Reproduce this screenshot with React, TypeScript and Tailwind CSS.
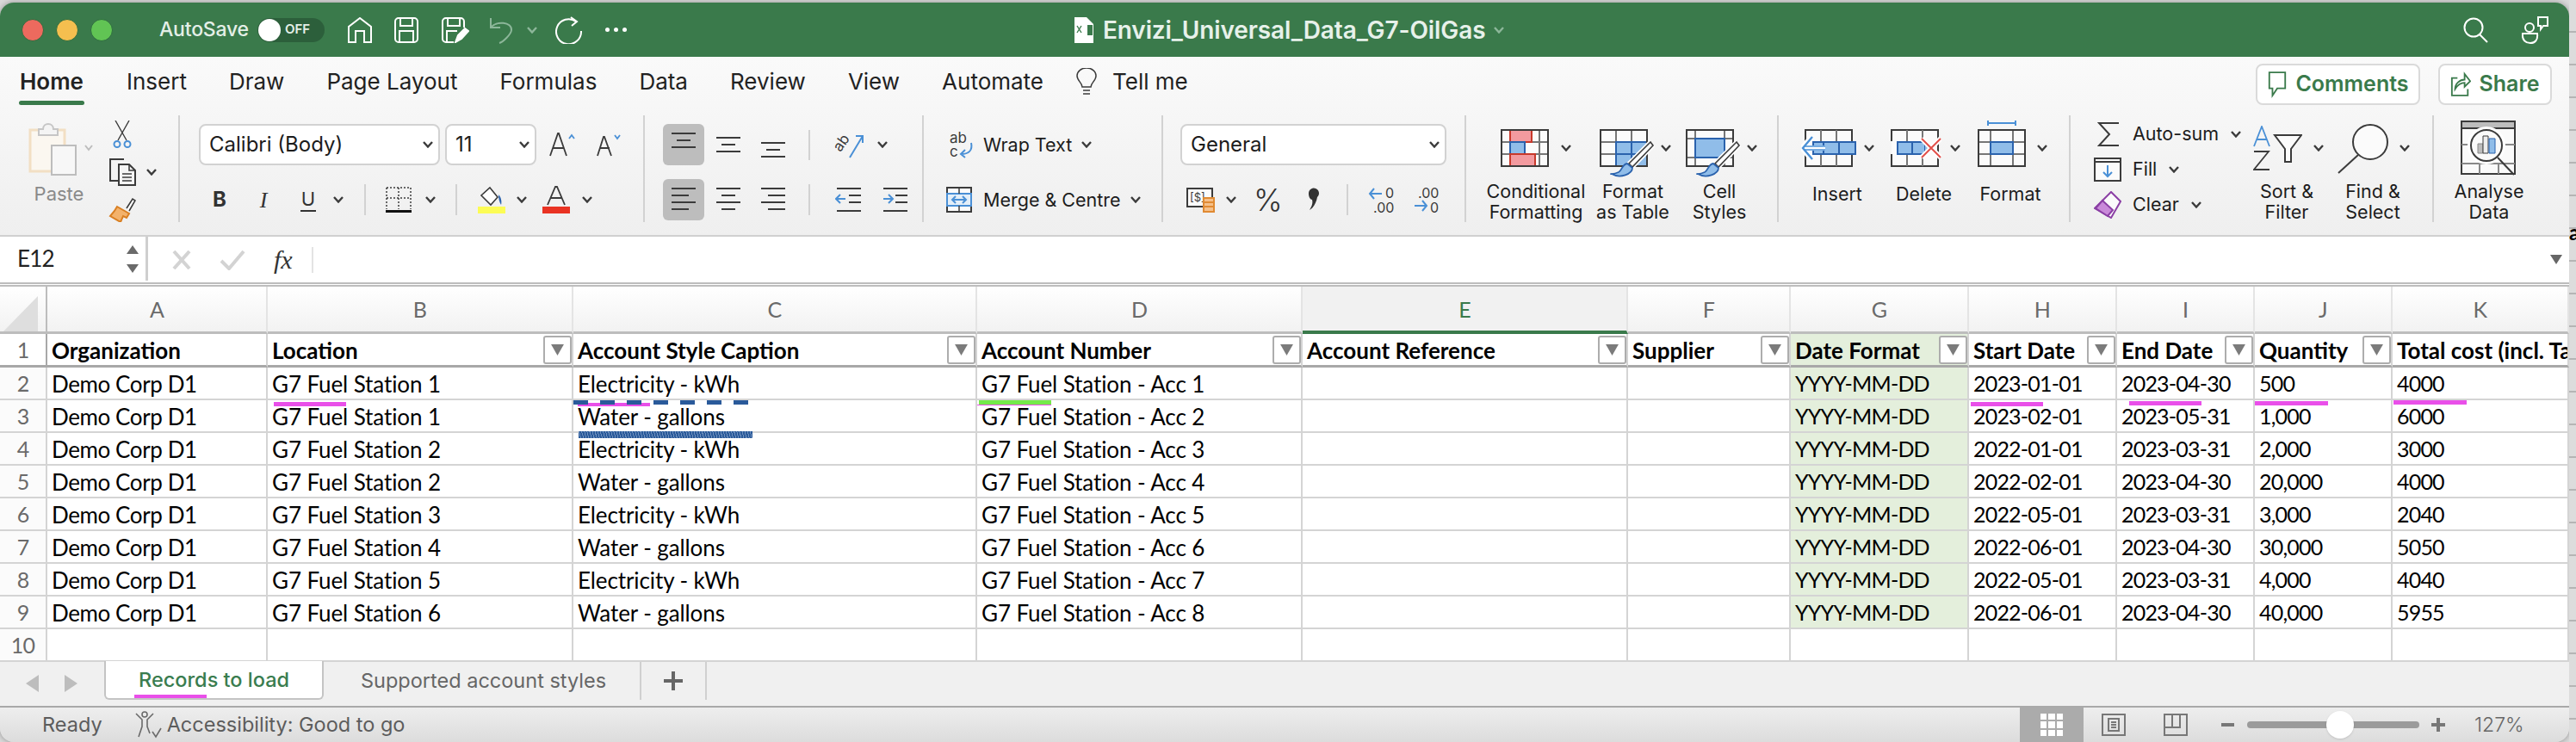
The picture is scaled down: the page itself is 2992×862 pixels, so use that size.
import * as React from "react"

const ink = "#3b3b3b"
const blue = "#4a90d6"
const navy = "#2a62ad"
const sky = "#90bde9"

const tabs = ["Insert", "Draw", "Page Layout", "Formulas", "Data", "Review", "View", "Automate"]

const rows = [
  ["Demo Corp D1", "G7 Fuel Station 1", "Electricity - kWh", "G7 Fuel Station - Acc 1", "2023-01-01", "2023-04-30", "500", "4000"],
  ["Demo Corp D1", "G7 Fuel Station 1", "Water - gallons", "G7 Fuel Station - Acc 2", "2023-02-01", "2023-05-31", "1,000", "6000"],
  ["Demo Corp D1", "G7 Fuel Station 2", "Electricity - kWh", "G7 Fuel Station - Acc 3", "2022-01-01", "2023-03-31", "2,000", "3000"],
  ["Demo Corp D1", "G7 Fuel Station 2", "Water - gallons", "G7 Fuel Station - Acc 4", "2022-02-01", "2023-04-30", "20,000", "4000"],
  ["Demo Corp D1", "G7 Fuel Station 3", "Electricity - kWh", "G7 Fuel Station - Acc 5", "2022-05-01", "2023-03-31", "3,000", "2040"],
  ["Demo Corp D1", "G7 Fuel Station 4", "Water - gallons", "G7 Fuel Station - Acc 6", "2022-06-01", "2023-04-30", "30,000", "5050"],
  ["Demo Corp D1", "G7 Fuel Station 5", "Electricity - kWh", "G7 Fuel Station - Acc 7", "2022-05-01", "2023-03-31", "4,000", "4040"],
  ["Demo Corp D1", "G7 Fuel Station 6", "Water - gallons", "G7 Fuel Station - Acc 8", "2022-06-01", "2023-04-30", "40,000", "5955"],
]

const headers = [
  { label: "Organization", filter: false },
  { label: "Location", filter: true },
  { label: "Account Style Caption", filter: true },
  { label: "Account Number", filter: true },
  { label: "Account Reference", filter: true },
  { label: "Supplier", filter: true },
  { label: "Date Format", filter: true, green: true },
  { label: "Start Date", filter: true },
  { label: "End Date", filter: true },
  { label: "Quantity", filter: true },
  { label: "Total cost (incl. Tax)", filter: false },
]

const letters = ["A", "B", "C", "D", "E", "F", "G", "H", "I", "J", "K"]
const gridCols = "grid grid-cols-[55px_256px_355px_469px_378px_378px_189px_207px_172px_160px_160px_205px]"
const wordCell = "text-[26px] tracking-[-0.1px]"

function Chev({ className = "", color = ink }: { className?: string; color?: string }) {
  return (
    <svg viewBox="0 0 12 8" className={`h-[8px] w-[12px] shrink-0 ${className}`} fill="none" stroke={color} strokeWidth="2.4">
      <path d="M1 1l5 5.5L11 1" />
    </svg>
  )
}

function Sep({ className = "" }: { className?: string }) {
  return <div className={`w-[2px] shrink-0 bg-[#d2d2d2] ${className}`} />
}

function Select({ label, className }: { label: string; className: string }) {
  return (
    <div className={`flex h-[48px] shrink-0 items-center justify-between rounded-[8px] border-2 border-[#d2d2d2] bg-white pr-[6px] pl-[10px] text-[24px] whitespace-nowrap text-[#1c1c1c] ${className}`}>
      <span>{label}</span>
      <Chev />
    </div>
  )
}

function AlignLines({ ys, widths, anchor }: { ys: number[]; widths: number[]; anchor: "l" | "c" | "r" }) {
  return (
    <svg viewBox="0 0 28 32" className="h-[32px] w-[28px]" stroke={ink} strokeWidth="2">
      {ys.map((y, i) => {
        const w = widths[i]
        const x = anchor === "l" ? 0 : anchor === "c" ? (28 - w) / 2 : 28 - w
        return <path key={i} d={`M${x} ${y}h${w}`} />
      })}
    </svg>
  )
}

function AlignButton({ active, children }: { active?: boolean; children: React.ReactNode }) {
  return (
    <div className={`flex h-[48px] w-[48px] shrink-0 items-center justify-center rounded-[6px] ${active ? "bg-[#bdbdbd]" : ""}`}>
      {children}
    </div>
  )
}

function TableGrid({ children, w, h }: { children?: React.ReactNode; w: number; h: number }) {
  return (
    <svg viewBox={`0 0 ${w} ${h}`} width={w} height={h} className="shrink-0" fill="none">
      {children}
    </svg>
  )
}

function Frame({ y = 0 }: { y?: number }) {
  return <rect x="1" y={y + 1} width="54" height="42" fill="#fbfbfb" stroke={ink} strokeWidth="2" />
}

function Brush() {
  return (
    <g>
      <path d="M58 16 L34 40 L30 46 L38 44 L61 20 Z" fill="#fff" stroke="#fff" strokeWidth="5" />
      <path d="M59 15 L34 40 L38 44 L62 19 Z" fill="#fff" stroke={ink} strokeWidth="1.6" />
      <path d="M32 40 C26 41 26 48 22 50 C15 53 11 52 14 52 C24 58 38 52 38 45 Z" fill={sky} stroke={navy} strokeWidth="1.8" />
    </g>
  )
}

function Label({ children }: { children: React.ReactNode }) {
  return <div className="text-center text-[21.5px] leading-[24px] whitespace-nowrap text-[#1c1c1c]">{children}</div>
}

function Filter() {
  return (
    <div className="flex h-[33px] w-[33px] shrink-0 items-center justify-center rounded-[3px] border-2 border-[#adadad] bg-white">
      <svg viewBox="0 0 16 14" className="h-[13px] w-[15px]" fill="#7b7b7b">
        <path d="M0 0h16L8 14z" />
      </svg>
    </div>
  )
}

function TitleBar() {
  return (
    <div className="flex h-[63px] shrink-0 items-center bg-[#3a7a4b] text-white">
      <div className="ml-[25px] flex gap-[14px]">
        <div className="h-[26px] w-[26px] rounded-full border border-[#2f6d3f] bg-[#ed6a5e]" />
        <div className="h-[26px] w-[26px] rounded-full border border-[#2f6d3f] bg-[#f5bf4f]" />
        <div className="h-[26px] w-[26px] rounded-full border border-[#2f6d3f] bg-[#61c454]" />
      </div>
      <span className="ml-[54px] text-[23px] font-medium tracking-[-0.2px] text-[#e4efe7]">AutoSave</span>
      <div className="ml-[10px] flex h-[28px] w-[78px] items-center rounded-full bg-[#2c5f3b]">
        <div className="ml-[1px] h-[26px] w-[26px] rounded-full bg-white" />
        <span className="ml-[5px] text-[15px] font-semibold text-[#e4efe7]">OFF</span>
      </div>
      <svg viewBox="0 0 28 30" className="ml-[27px] h-[30px] w-[28px]" fill="none" stroke="#fff" strokeWidth="2">
        <path d="M1 29V11L14 1l13 10v18h-8V16H9v13z" />
      </svg>
      <svg viewBox="0 0 28 30" className="ml-[26px] h-[30px] w-[28px]" fill="none" stroke="#fff" strokeWidth="2">
        <path d="M5 1h18a4 4 0 0 1 4 4v20a4 4 0 0 1-4 4H5a4 4 0 0 1-4-4V5a4 4 0 0 1 4-4zM7 1v9h14V1M6 29V16h16v13" />
      </svg>
      <svg viewBox="0 0 32 30" className="ml-[27px] h-[30px] w-[32px]" fill="none" stroke="#fff" strokeWidth="2">
        <path d="M14 29H5a4 4 0 0 1-4-4V5a4 4 0 0 1 4-4h17a4 4 0 0 1 4 4v7M7 1v9h14V1M6 29V16h12" />
        <path d="M16 29l3-8 8-8 4 3-8 9z" fill="#fff" />
      </svg>
      <svg viewBox="0 0 30 32" className="ml-[22px] h-[32px] w-[30px]" fill="none" stroke="#8db79a" strokeWidth="2">
        <path d="M3 2v11h11M3 13C9 5 28 6 27 16c-.4 5-10 14-14 15" />
      </svg>
      <Chev className="ml-[15px]" color="#8db79a" />
      <svg viewBox="0 0 32 32" className="ml-[21px] h-[32px] w-[32px]" fill="none" stroke="#fff" strokeWidth="2">
        <path d="M24 6A14.5 14.5 0 1 0 30 17M18 1l7 5-6 5" />
      </svg>
      <div className="ml-[26px] flex gap-[5px]">
        <div className="h-[5px] w-[5px] rounded-full bg-white" />
        <div className="h-[5px] w-[5px] rounded-full bg-white" />
        <div className="h-[5px] w-[5px] rounded-full bg-white" />
      </div>
      <svg viewBox="0 0 22 30" className="ml-[520px] h-[30px] w-[22px]">
        <path d="M0 0h14l8 8v22H0z" fill="#fff" />
        <path d="M15 9h6v12h-6z" fill="#3a7a4b" />
        <path d="M3 10l5 8M8 10l-5 8" stroke="#3a7a4b" strokeWidth="1.4" />
      </svg>
      <span className="ml-[11px] text-[28px] font-semibold tracking-[-0.1px] whitespace-nowrap text-[#e7f1ea]">Envizi_Universal_Data_G7-OilGas</span>
      <Chev className="ml-[10px]" color="#8db79a" />
      <svg viewBox="0 0 30 30" className="ml-auto h-[30px] w-[30px]" fill="none" stroke="#fff" strokeWidth="2">
        <circle cx="12" cy="12" r="10.5" />
        <path d="M19 20l9 9" />
      </svg>
      <svg viewBox="0 0 32 32" className="mr-[23px] ml-[38px] h-[32px] w-[32px]" fill="none" stroke="#fff" strokeWidth="2">
        <circle cx="9" cy="13" r="5" />
        <path d="M1 20h17c1 8-3 11-8 11S0 28 1 20zM19 1h11v10h-5l-3 4v-4h-3z" />
      </svg>
    </div>
  )
}

function RibbonTabs() {
  return (
    <div className="flex h-[68px] items-start pr-[20px] pl-[22px]">
      <div className="flex gap-[49px] pt-[13px] text-[26px] leading-[32px] whitespace-nowrap text-[#222]">
        <div className="flex w-[76px] flex-col items-center">
          <span className="font-semibold">Home</span>
          <div className="mt-[6px] h-[5px] w-[76px] rounded-full bg-[#3a7a4b]" />
        </div>
        {tabs.map((tab) => (
          <span key={tab}>{tab}</span>
        ))}
        <div className="-ml-[11px] flex items-start">
          <svg viewBox="0 0 24 32" className="h-[32px] w-[24px]" fill="none" stroke={ink} strokeWidth="1.5">
            <path d="M7 22c0-5-6-7-6-13a11 9 0 0 1 22 0c0 6-6 8-6 13zM8 26h8M8 30h8" />
          </svg>
          <span className="ml-[18px]">Tell me</span>
        </div>
      </div>
      <div className="ml-auto mt-[8px] flex gap-[21px] text-[25px] font-semibold text-[#3a7a4b]">
        <div className="flex h-[48px] w-[191px] items-center justify-center gap-[9px] rounded-[8px] border-2 border-[#dadada] bg-white">
          <svg viewBox="0 0 26 34" className="h-[32px] w-[24px]" fill="none" stroke="#3a7a4b" strokeWidth="2">
            <path d="M3 2h20v20H13l-6 9v-9H3z" />
          </svg>
          Comments
        </div>
        <div className="flex h-[48px] w-[132px] items-center justify-center gap-[9px] rounded-[8px] border-2 border-[#dadada] bg-white">
          <svg viewBox="0 0 26 32" className="h-[30px] w-[24px]" fill="none" stroke="#3a7a4b" strokeWidth="2">
            <path d="M9 8H2v22h20v-8M6 22c0-7 6-12 12-12V3l7 9-7 7v-5c-5 0-9 3-12 8z" />
          </svg>
          Share
        </div>
      </div>
    </div>
  )
}

function ClipboardGroup() {
  return (
    <div className="flex h-[124px] w-[209px] shrink-0 border-r-2 border-[#d2d2d2]">
      <div className="ml-[33px] flex w-[77px] flex-col">
        <svg viewBox="0 0 77 60" className="mt-[9px] h-[60px] w-[77px] overflow-visible" fill="none">
          <path d="M2 8h40v48H2z" stroke="#f2dfc4" strokeWidth="3" fill="#fbf7f0" />
          <path d="M12 14V7h5c0-8 12-8 12 0h5v7z" stroke="#c6c6c6" strokeWidth="2" fill="#f4f4f4" />
          <path d="M27 26h28v34H27z" stroke="#bdbdbd" strokeWidth="2" fill="#f7f7f7" />
          <path d="M66 26l4 5 4-5" stroke="#bdbdbd" strokeWidth="2" />
        </svg>
        <div className="mt-[8px] w-[71px] text-center text-[22px] leading-[28px] text-[#8a8a8a]">Paste</div>
      </div>
      <div className="ml-[16px] flex flex-col">
        <svg viewBox="0 0 22 32" className="mt-[6px] ml-[5px] h-[32px] w-[22px]" fill="none" stroke={ink} strokeWidth="1.4">
          <path d="M3 0l13 23M19 0L6 23" />
          <circle cx="5" cy="27.5" r="3.5" stroke={blue} strokeWidth="2" />
          <circle cx="17" cy="27.5" r="3.5" stroke={blue} strokeWidth="2" />
        </svg>
        <div className="mt-[12px] flex items-center">
          <svg viewBox="0 0 32 32" className="h-[32px] w-[32px]" fill="none" stroke={ink} strokeWidth="2">
            <path d="M18 1H2v25h9" />
            <path d="M12 7h12l7 7v17H12z" fill="#f4f4f4" />
            <path d="M24 7v7h7M16 18h11M16 22h11M16 26h11" strokeWidth="1.6" />
          </svg>
          <Chev className="ml-[12px]" />
        </div>
        <svg viewBox="0 0 32 30" className="mt-[12px] h-[30px] w-[32px]" fill="none">
          <path d="M21 14l7-11 3 2-7 12" fill="#fff" stroke={ink} strokeWidth="1.6" />
          <path d="M10 12l14 8-3 5-4-2-3 7-12-7 5-6z" fill="#f3b26b" stroke="#d97f22" strokeWidth="2" />
        </svg>
      </div>
    </div>
  )
}

function FontGroup() {
  return (
    <div className="flex h-[124px] w-[540px] shrink-0 flex-col border-r-2 border-[#d2d2d2]">
      <div className="ml-[22px] mt-[10px] flex h-[48px] items-center">
        <Select label="Calibri (Body)" className="w-[280px]" />
        <Select label="11" className="ml-[6px] w-[106px]" />
        <svg viewBox="0 0 30 28" className="ml-[15px] h-[28px] w-[30px]" fill="none" stroke={ink} strokeWidth="1.8">
          <path d="M1 27L10 1h1l9 26M4 18h13" />
          <path d="M23 7l3-4 3 4" stroke={blue} />
        </svg>
        <svg viewBox="0 0 30 28" className="ml-[25px] h-[28px] w-[30px]" fill="none" stroke={ink} strokeWidth="1.8">
          <path d="M1 27L8 5h1l8 22M4 18h11" />
          <path d="M21 3l3 4 3-4" stroke={blue} />
        </svg>
      </div>
      <div className="mt-[22px] flex h-[36px] items-center">
        <span className="ml-[38px] w-[15px] text-center text-[24px] font-bold text-[#333]">B</span>
        <span className="ml-[38px] w-[12px] text-center font-['Liberation_Serif',serif] text-[26px] text-[#333] italic">I</span>
        <span className="ml-[37px] w-[18px] border-b-2 border-[#333] text-center text-[22px] leading-[26px] text-[#333]">U</span>
        <Chev className="ml-[20px]" />
        <Sep className="ml-[24px] h-[36px]" />
        <svg viewBox="0 0 30 30" className="ml-[23px] h-[30px] w-[30px]" fill="none" stroke={ink}>
          <path d="M1 1h28M1 1v25M29 1v25M15 1v25M1 13h28" strokeWidth="1.5" strokeDasharray="2 2" />
          <path d="M0 28.5h30" strokeWidth="3" stroke="#111" />
        </svg>
        <Chev className="ml-[16px]" />
        <Sep className="ml-[23px] h-[36px]" />
        <svg viewBox="0 0 32 32" className="ml-[24px] h-[32px] w-[32px]" fill="none">
          <path d="M14 2l9 11-8 9-11-11z" stroke={ink} strokeWidth="1.6" fill="#fff" />
          <path d="M24 10c3 3 4 8 3 12-2-3-3-7-3-12z" fill={navy} />
          <path d="M0 24h32v8H0z" fill="#fcfc55" />
        </svg>
        <Chev className="ml-[13px]" />
        <svg viewBox="0 0 32 32" className="ml-[18px] h-[32px] w-[32px]">
          <path d="M6 22L15 1h2l9 21M10 14h12" fill="none" stroke={ink} strokeWidth="1.8" />
          <path d="M0 24h32v8H0z" fill="#e93323" />
        </svg>
        <Chev className="ml-[14px]" />
      </div>
    </div>
  )
}

function AlignGroup() {
  return (
    <div className="flex h-[124px] w-[324px] shrink-0 flex-col gap-[16px] border-r-2 border-[#d2d2d2] pt-[10px] pl-[21px]">
      <div className="flex h-[48px] items-center gap-[4px]">
        <AlignButton active>
          <AlignLines ys={[3, 11, 19]} widths={[28, 16, 28]} anchor="c" />
        </AlignButton>
        <AlignButton>
          <AlignLines ys={[8, 16, 24]} widths={[28, 16, 28]} anchor="c" />
        </AlignButton>
        <AlignButton>
          <AlignLines ys={[14, 22, 30]} widths={[28, 16, 28]} anchor="c" />
        </AlignButton>
        <Sep className="ml-[13px] h-[35px]" />
        <svg viewBox="0 0 36 32" className="ml-[22px] h-[32px] w-[36px] overflow-visible" fill="none">
          <path d="M20 31L35 6M27 6h8v8" stroke={blue} strokeWidth="2" />
          <text x="1" y="18" fontSize="17" fill={ink} transform="rotate(-55 12 14)" fontFamily="Inter">ab</text>
        </svg>
        <Chev className="ml-[12px]" />
      </div>
      <div className="flex h-[48px] items-center gap-[4px]">
        <AlignButton active>
          <AlignLines ys={[3, 11, 19, 27]} widths={[28, 20, 28, 20]} anchor="l" />
        </AlignButton>
        <AlignButton>
          <AlignLines ys={[3, 11, 19, 27]} widths={[28, 16, 28, 16]} anchor="c" />
        </AlignButton>
        <AlignButton>
          <AlignLines ys={[3, 11, 19, 27]} widths={[28, 20, 28, 20]} anchor="r" />
        </AlignButton>
        <Sep className="ml-[13px] h-[36px]" />
        <svg viewBox="0 0 30 32" className="ml-[25px] h-[32px] w-[30px]" fill="none" stroke={ink} strokeWidth="2">
          <path d="M2 3h28M16 11h14M16 19h14M2 29h28" />
          <path d="M12 15H2M6 10l-5 5 5 5" stroke={blue} />
        </svg>
        <svg viewBox="0 0 30 32" className="ml-[22px] h-[32px] w-[30px]" fill="none" stroke={ink} strokeWidth="2">
          <path d="M0 3h28M14 11h14M14 19h14M0 29h28" />
          <path d="M0 15h10M6 10l5 5-5 5" stroke={blue} />
        </svg>
      </div>
    </div>
  )
}

function WrapGroup() {
  return (
    <div className="flex h-[124px] w-[278px] shrink-0 flex-col gap-[16px] border-r-2 border-[#d2d2d2] pt-[10px] text-[21.5px] whitespace-nowrap text-[#1c1c1c]">
      <div className="flex h-[48px] items-center">
        <svg viewBox="0 0 30 32" className="ml-[29px] h-[32px] w-[30px] overflow-visible" fill="none">
          <text x="1" y="14" fontSize="17" fill={ink} fontFamily="Inter">ab</text>
          <text x="1" y="30" fontSize="17" fill={ink} fontFamily="Inter">c</text>
          <path d="M26 14c2 9-3 13-12 13M19 22l-5 5 5 4" stroke={blue} strokeWidth="2" />
        </svg>
        <span className="ml-[10px]">Wrap Text</span>
        <Chev className="ml-[11px]" />
      </div>
      <div className="flex h-[48px] items-center">
        <svg viewBox="0 0 30 30" className="ml-[26px] h-[30px] w-[30px]" fill="none">
          <rect x="1" y="1" width="28" height="28" stroke={ink} strokeWidth="2" fill="#fbfbfb" />
          <rect x="1" y="8" width="28" height="14" stroke={blue} strokeWidth="2" fill="#e4eff9" />
          <path d="M15 1v7M15 22v7" stroke={ink} strokeWidth="1.5" />
          <path d="M7 15h16M11 11l-4 4 4 4M19 11l4 4-4 4" stroke={blue} strokeWidth="2" />
        </svg>
        <span className="ml-[13px]">Merge &amp; Centre</span>
        <Chev className="ml-[11px]" />
      </div>
    </div>
  )
}

function NumberGroup() {
  return (
    <div className="flex h-[124px] w-[352px] shrink-0 flex-col border-r-2 border-[#d2d2d2] pt-[10px]">
      <Select label="General" className="ml-[20px] w-[309px]" />
      <div className="mt-[22px] flex h-[36px] items-center">
        <svg viewBox="0 0 34 32" className="ml-[27px] h-[32px] w-[34px] overflow-visible" fill="none">
          <rect x="1" y="3" width="29" height="21" stroke={ink} strokeWidth="2" fill="#fbfbfb" />
          <text x="4" y="18" fontSize="13" fill={ink} fontFamily="Inter">{"[$]"}</text>
          <path d="M20 14h12v16H20z" fill="#f5c08a" stroke="#e08a32" strokeWidth="2" />
          <path d="M20 19h12M20 24h12" stroke="#e08a32" strokeWidth="2" />
        </svg>
        <Chev className="ml-[12px]" />
        <span className="ml-[20px] w-[30px] text-center text-[36px] leading-[36px] font-light text-[#333]">%</span>
        <svg viewBox="0 0 18 32" className="ml-[30px] h-[32px] w-[18px]" fill="#333">
          <path d="M4 9a6 6 0 1 1 10 4c-1 6-4 12-9 15 3-5 4-8 3-12-2 0-4-3-4-7z" />
        </svg>
        <Sep className="ml-[30px] h-[36px]" />
        <svg viewBox="0 0 30 34" className="ml-[24px] h-[34px] w-[30px] overflow-visible" fill="none">
          <path d="M1 10h14M6 4l-5 6 5 6" stroke={blue} strokeWidth="2" />
          <text x="19" y="15" fontSize="16" fill={ink} fontFamily="Inter">0</text>
          <text x="5" y="32" fontSize="16" fill={ink} fontFamily="Inter">.00</text>
        </svg>
        <svg viewBox="0 0 32 34" className="ml-[20px] h-[34px] w-[32px] overflow-visible" fill="none">
          <path d="M3 24h14M12 18l5 6-5 6" stroke={blue} strokeWidth="2" />
          <text x="7" y="15" fontSize="16" fill={ink} fontFamily="Inter">.00</text>
          <text x="21" y="32" fontSize="16" fill={ink} fontFamily="Inter">0</text>
        </svg>
      </div>
    </div>
  )
}

function StylesGroup() {
  return (
    <div className="flex h-[124px] w-[363px] shrink-0 border-r-2 border-[#d2d2d2] pl-[19px]">
      <div className="flex w-[124px] flex-col">
        <div className="flex h-[80px] items-start">
          <div className="ml-[21px] mt-[16px]">
            <TableGrid w={56} h={44}>
              <Frame />
              <path d="M11 1v42M45 1v42M1 15h54M1 29h54" stroke="#777" strokeWidth="2" />
              <rect x="11" y="1" width="25" height="14" fill="#f29a9f" stroke="#c8392b" strokeWidth="2" />
              <rect x="11" y="15" width="17" height="14" fill={sky} stroke={navy} strokeWidth="2" />
              <rect x="11" y="29" width="29" height="14" fill="#f29a9f" stroke="#c8392b" strokeWidth="2" />
              <rect x="1" y="1" width="54" height="42" stroke={ink} strokeWidth="2" />
            </TableGrid>
          </div>
          <Chev className="ml-[14px] mt-[34px]" />
        </div>
        <Label>Conditional<br />Formatting</Label>
      </div>
      <div className="flex w-[101px] flex-col">
        <div className="flex h-[80px] items-start">
          <div className="ml-[12px] mt-[16px]">
            <TableGrid w={64} h={56}>
              <Frame />
              <path d="M19 1v42M37 1v42M1 15h54M1 29h54" stroke="#777" strokeWidth="2" />
              <rect x="19" y="15" width="36" height="28" fill={sky} stroke={navy} strokeWidth="2" />
              <path d="M37 15v28M19 29h36" stroke={navy} strokeWidth="2" />
              <path d="M1 1h54v42H1z" stroke={ink} strokeWidth="2" />
              <Brush />
            </TableGrid>
          </div>
          <Chev className="ml-[7px] mt-[34px]" />
        </div>
        <Label>Format<br />as Table</Label>
      </div>
      <div className="flex w-[100px] flex-col">
        <div className="flex h-[80px] items-start">
          <div className="ml-[11px] mt-[16px]">
            <TableGrid w={64} h={56}>
              <Frame />
              <path d="M11 1v42M45 1v42M1 11h54M1 33h54" stroke="#777" strokeWidth="2" />
              <rect x="11" y="11" width="34" height="22" fill={sky} stroke={navy} strokeWidth="2" />
              <path d="M1 1h54v42H1z" stroke={ink} strokeWidth="2" />
              <Brush />
            </TableGrid>
          </div>
          <Chev className="ml-[7px] mt-[34px]" />
        </div>
        <Label>Cell<br />Styles</Label>
      </div>
    </div>
  )
}

function CellsGroup() {
  return (
    <div className="flex h-[124px] w-[339px] shrink-0 border-r-2 border-[#d2d2d2] pl-[18px]">
      <div className="flex w-[100px] flex-col">
        <div className="flex h-[79px] items-start">
          <div className="ml-[8px] mt-[16px]">
            <TableGrid w={64} h={44}>
              <rect x="5" y="1" width="54" height="42" fill="#fbfbfb" stroke={ink} strokeWidth="2" />
              <path d="M23 1v42M41 1v42" stroke="#777" strokeWidth="2" />
              <rect x="14" y="15" width="49" height="14" fill={sky} stroke={navy} strokeWidth="2" />
              <path d="M26 15v14M44 15v14" stroke={navy} strokeWidth="2" />
              <path d="M28 22H2M12 9L1 22l11 13" stroke="#fff" strokeWidth="6" />
              <path d="M28 20H4M28 24H4" stroke={blue} strokeWidth="1.5" />
              <path d="M13 9L2 22l11 13" stroke={blue} strokeWidth="2.4" />
            </TableGrid>
          </div>
          <Chev className="ml-[9px] mt-[34px]" />
        </div>
        <Label>Insert</Label>
      </div>
      <div className="flex w-[101px] flex-col">
        <div className="flex h-[79px] items-start">
          <div className="ml-[11px] mt-[16px]">
            <TableGrid w={60} h={44}>
              <path d="M2 14V1h54v42H2V29" fill="#fbfbfb" stroke={ink} strokeWidth="2" />
              <path d="M20 1v42M38 1v42" stroke="#777" strokeWidth="2" />
              <rect x="9" y="15" width="32" height="14" fill={sky} stroke={navy} strokeWidth="2" />
              <path d="M26 15v14" stroke={navy} strokeWidth="2" />
              <path d="M41 15l9 7-9 7z" fill={sky} />
              <path d="M37 11l22 22M59 11L37 33" stroke="#fff" strokeWidth="6" />
              <path d="M37 11l22 22M59 11L37 33" stroke="#e2504a" strokeWidth="2" />
            </TableGrid>
          </div>
          <Chev className="ml-[10px] mt-[34px]" />
        </div>
        <Label>Delete</Label>
      </div>
      <div className="flex w-[100px] flex-col">
        <div className="flex h-[79px] items-start">
          <div className="ml-[12px] mt-[6px]">
            <TableGrid w={56} h={54}>
              <path d="M12 3h32M12 0v6M44 0v6" stroke={blue} strokeWidth="2" />
              <rect x="1" y="11" width="54" height="42" fill="#fbfbfb" stroke={ink} strokeWidth="2" />
              <path d="M15 11v42M41 11v42M1 25h54M1 39h54" stroke="#777" strokeWidth="2" />
              <rect x="15" y="25" width="26" height="14" fill={sky} stroke={navy} strokeWidth="2" />
              <rect x="1" y="11" width="54" height="42" stroke={ink} strokeWidth="2" />
            </TableGrid>
          </div>
          <Chev className="ml-[13px] mt-[34px]" />
        </div>
        <Label>Format</Label>
      </div>
    </div>
  )
}

function EditingGroup() {
  return (
    <div className="flex h-[124px] w-[422px] shrink-0 border-r-2 border-[#d2d2d2] pl-[27px]">
      <div className="flex w-[164px] shrink-0 flex-col pt-px text-[21.5px] whitespace-nowrap text-[#1c1c1c]">
        <div className="flex h-[44px] items-center">
          <div className="w-[45px] shrink-0">
            <svg viewBox="0 0 26 28" className="ml-[4px] h-[28px] w-[26px]" fill="none" stroke={ink} strokeWidth="2">
              <path d="M25 1H2l12 13L2 27h23" />
            </svg>
          </div>
          <span>Auto-sum</span>
          <Chev className="ml-[14px]" />
        </div>
        <div className="flex h-[44px] items-center">
          <div className="w-[45px] shrink-0">
            <svg viewBox="0 0 32 28" className="h-[28px] w-[32px]" fill="none">
              <rect x="1" y="1" width="30" height="26" stroke={ink} strokeWidth="2" fill="#fbfbfb" />
              <path d="M1 5h30" stroke={ink} strokeWidth="2" />
              <path d="M16 9v13M11 17l5 5 5-5" stroke={blue} strokeWidth="2" />
            </svg>
          </div>
          <span>Fill</span>
          <Chev className="ml-[14px]" />
        </div>
        <div className="flex h-[44px] items-center">
          <div className="w-[45px] shrink-0">
            <svg viewBox="0 0 32 32" className="h-[32px] w-[32px]" fill="none">
              <path d="M20 1l11 11-11 19L1 20z" fill="#fbfbfb" stroke="#8b3fa5" strokeWidth="2" />
              <path d="M10 11l12 11-6 7-14-9z" fill="#c98ad9" stroke="#8b3fa5" strokeWidth="2" />
            </svg>
          </div>
          <span>Clear</span>
          <Chev className="ml-[14px]" />
        </div>
      </div>
      <div className="ml-[10px] flex w-[100px] flex-col">
        <div className="flex h-[80px] items-start">
          <svg viewBox="0 0 57 52" className="ml-[11px] mt-[12px] h-[52px] w-[57px]" fill="none">
            <path d="M1 24L10 1l9 23M4 16h12" stroke={blue} strokeWidth="1.8" />
            <path d="M1 30h17L1 51h18" stroke={ink} strokeWidth="1.8" />
            <path d="M25 11h31L44 27v15h-7V27z" fill="#fbfbfb" stroke={ink} strokeWidth="2" />
          </svg>
          <Chev className="ml-[13px] mt-[34px]" />
        </div>
        <Label>Sort &amp;<br />Filter</Label>
      </div>
      <div className="flex w-[100px] flex-col">
        <div className="flex h-[80px] items-start">
          <svg viewBox="0 0 60 58" className="ml-[9px] mt-[10px] h-[58px] w-[60px]" fill="none" stroke={ink} strokeWidth="2">
            <circle cx="38" cy="21" r="20" fill="#fbfbfb" />
            <path d="M24 36L1 57" />
          </svg>
          <Chev className="ml-[12px] mt-[34px]" />
        </div>
        <Label>Find &amp;<br />Select</Label>
      </div>
    </div>
  )
}

function AnalyseGroup() {
  return (
    <div className="flex h-[124px] flex-col pl-[9px]">
      <div className="h-[80px] pt-[6px] pl-[22px]">
        <svg viewBox="0 0 64 64" className="h-[64px] w-[64px]" fill="none">
          <rect x="1" y="1" width="62" height="61" fill="#fafafa" stroke={ink} strokeWidth="2" />
          <path d="M1 1h62v8H1z" fill="#bdbdbd" stroke={ink} strokeWidth="2" />
          <path d="M1 28h62M1 50h62M22 50v12M44 50v12" stroke="#888" strokeWidth="2" />
          <circle cx="30" cy="29" r="20" fill="#fafafa" stroke="#fff" strokeWidth="4" />
          <circle cx="30" cy="29" r="18" stroke={ink} strokeWidth="2" />
          <path d="M20 27h6v11h-6z" fill="#bdbdbd" stroke="#888" />
          <path d="M26 18h6v20h-6z" fill="#eee" stroke={ink} />
          <path d="M33 21h7v17h-7z" fill={sky} stroke={navy} />
          <path d="M43 43l19 20" stroke={ink} strokeWidth="2" />
        </svg>
      </div>
      <div className="w-[110px]">
        <Label>Analyse<br />Data</Label>
      </div>
    </div>
  )
}

function FormulaBar() {
  return (
    <div className="flex h-[53px] shrink-0 bg-white">
      <div className="flex h-[51px] w-[172px] items-center border-r-[3px] border-[#cfcfcf] pl-[20px] font-['Lato',sans-serif] text-[26px] tracking-[-0.8px] text-[#222]">
        E12
        <div className="ml-[84px] flex flex-col gap-[12px]">
          <svg viewBox="0 0 14 10" className="h-[10px] w-[14px]" fill="#6a6a6a"><path d="M7 0l7 10H0z" /></svg>
          <svg viewBox="0 0 14 10" className="h-[10px] w-[14px]" fill="#6a6a6a"><path d="M7 10l7-10H0z" /></svg>
        </div>
      </div>
      <div className="flex flex-1 items-center">
        <svg viewBox="0 0 22 22" className="ml-[28px] h-[22px] w-[22px]" fill="none" stroke="#d3d3d3" strokeWidth="4">
          <path d="M2 1l18 20M20 1L2 21" />
        </svg>
        <svg viewBox="0 0 30 24" className="ml-[33px] h-[24px] w-[30px]" fill="none" stroke="#d3d3d3" strokeWidth="4">
          <path d="M2 13l9 9L28 2" />
        </svg>
        <span className="ml-[33px] w-[28px] font-['Liberation_Serif',serif] text-[30px] leading-[30px] text-[#333] italic">fx</span>
        <div className="ml-[16px] h-[30px] w-[2px] bg-[#e3e3e3]" />
        <svg viewBox="0 0 14 11" className="mr-[8px] ml-auto h-[11px] w-[14px]" fill="#666"><path d="M0 0h14L7 11z" /></svg>
      </div>
    </div>
  )
}

function Cell({ children, className = "" }: { children?: React.ReactNode; className?: string }) {
  return (
    <div className={`flex h-[38px] items-center overflow-hidden border-r-2 border-b-2 border-[#d4d4d4] pt-[2px] pl-[5px] whitespace-nowrap ${className}`}>
      {children}
    </div>
  )
}

function Sheet() {
  return (
    <div className="relative h-[435px] shrink-0 bg-white font-['Lato',sans-serif] text-[25px] tracking-[-0.8px] text-black">
      <div className={gridCols}>
        <div className="flex h-[55px] items-end justify-center border-r-2 border-b-[3px] border-[#bdbdbd] bg-linear-to-b from-white to-[#f2f2f2]">
          <svg viewBox="0 0 40 41" className="mr-[5px] h-[41px] w-[40px]" fill="#dedede"><path d="M40 0v41H0z" /></svg>
        </div>
        {letters.map((letter) =>
          letter === "E" ? (
            <div key={letter} className="flex h-[55px] items-center justify-center border-r-2 border-b-[4px] border-r-[#e4e4e4] border-b-[#3a7a4b] bg-[#f1f1f1] pt-[2px] text-[#3a7a4b]">
              {letter}
            </div>
          ) : (
            <div key={letter} className="flex h-[55px] items-center justify-center border-r-2 border-b-[3px] border-r-[#e4e4e4] border-b-[#bdbdbd] bg-linear-to-b from-white to-[#f2f2f2] pt-[2px] text-[#6a6a6a]">
              {letter}
            </div>
          )
        )}
        <div className="flex h-[39px] items-center justify-center border-r-2 border-b-[3px] border-[#a8a8a8] bg-white pt-[2px] text-[#6a6a6a]">1</div>
        {headers.map((h) => (
          <div
            key={h.label}
            className={`flex h-[39px] items-center justify-between overflow-hidden border-r-2 border-b-[3px] border-r-[#d4d4d4] border-b-[#a8a8a8] pl-[5px] text-[26px] font-bold tracking-normal whitespace-nowrap ${h.green ? "bg-[#e4efdc]" : ""}`}
          >
            <span className="pt-[2px]">{h.label}</span>
            {h.filter && <Filter />}
          </div>
        ))}
        {rows.map((row, i) => (
          <React.Fragment key={i}>
            <div className="flex h-[38px] items-center justify-center border-r-2 border-b-2 border-[#d4d4d4] bg-[#fbfbfb] pt-[2px] text-[#6a6a6a]">{i + 2}</div>
            <Cell className="text-[26px] tracking-[-0.4px]">{row[0]}</Cell>
            <Cell className={wordCell}>{row[1]}</Cell>
            <Cell className={wordCell}>{row[2]}</Cell>
            <Cell className={wordCell}>{row[3]}</Cell>
            <Cell />
            <Cell />
            <Cell className="bg-[#e4efdc]">YYYY-MM-DD</Cell>
            <Cell>{row[4]}</Cell>
            <Cell>{row[5]}</Cell>
            <Cell>{row[6]}</Cell>
            <Cell>{row[7]}</Cell>
          </React.Fragment>
        ))}
        <div className="flex h-[38px] items-center justify-center border-r-2 border-b-2 border-[#d4d4d4] bg-[#fbfbfb] pt-[2px] text-[#6a6a6a]">10</div>
        {letters.map((letter) => (
          <Cell key={letter} />
        ))}
      </div>
      {/* Hand-drawn highlight marks over the cells */}
      <div className="absolute top-[134px] left-[318px] h-[5px] w-[84px] bg-[#e94fe9]" />
      <div className="absolute top-[135px] left-[671px] h-[4px] w-[84px] bg-[#e94fe9]" />
      <div className="absolute top-[132px] left-[666px] h-[5px] w-[204px] bg-[repeating-linear-gradient(90deg,#2a5a9a_0,#2a5a9a_17px,transparent_17px,transparent_31px)]" />
      <div className="absolute top-[168px] left-[672px] h-[8px] w-[202px] bg-[repeating-linear-gradient(75deg,#2a5a9a_0,#2a5a9a_2px,#6d8fbe_2px,#6d8fbe_3px)]" />
      <div className="absolute top-[137px] left-[1135px] h-[1px] w-[86px] bg-[#e94fe9]" />
      <div className="absolute top-[132px] left-[1137px] h-[5px] w-[84px] bg-[#74ea4a]" />
      <div className="absolute top-[134px] left-[2289px] h-[5px] w-[84px] bg-[#e94fe9]" />
      <div className="absolute top-[133px] left-[2473px] h-[5px] w-[84px] bg-[#e94fe9]" />
      <div className="absolute top-[133px] left-[2619px] h-[5px] w-[85px] bg-[#e94fe9]" />
      <div className="absolute top-[132px] left-[2780px] h-[5px] w-[85px] bg-[#e94fe9]" />
    </div>
  )
}

function SheetTabs() {
  return (
    <div className="flex h-[52px] shrink-0 items-start bg-[#f0f0f0] text-[23.5px]">
      <svg viewBox="0 0 15 20" className="ml-[30px] mt-[16px] h-[20px] w-[15px]" fill="#bdbdbd"><path d="M15 0v20L0 10z" /></svg>
      <svg viewBox="0 0 15 20" className="ml-[30px] mt-[16px] h-[20px] w-[15px]" fill="#bdbdbd"><path d="M0 0v20l15-10z" /></svg>
      <div className="relative ml-[31px] flex h-[45px] w-[255px] items-center justify-center rounded-b-[6px] border-x-2 border-b-2 border-[#c4c4c4] bg-white font-medium text-[#3a7d4f]">
        Records to load
        <div className="absolute bottom-0 left-[33px] h-[4px] w-[84px] bg-[#e94fe9]" />
      </div>
      <div className="flex h-[45px] w-[369px] items-center border-r-2 border-[#d0d0d0] pl-[43px] text-[#666]">Supported account styles</div>
      <div className="flex h-[45px] w-[76px] items-center justify-center border-r-2 border-[#d0d0d0]">
        <svg viewBox="0 0 22 22" className="h-[22px] w-[22px]" fill="#666"><path d="M9 0h4v9h9v4h-9v9H9v-9H0V9h9z" /></svg>
      </div>
    </div>
  )
}

function StatusBar() {
  return (
    <div className="flex h-[42px] shrink-0 items-center border-t-2 border-[#a9a9a9] bg-linear-to-b from-[#eeeeee] to-[#dcdcdc] text-[23.5px] text-[#5c5c5c]">
      <span className="ml-[49px]">Ready</span>
      <svg viewBox="0 0 34 32" className="ml-[36px] h-[32px] w-[34px]" fill="none" stroke="#6a6a6a" strokeWidth="1.6">
        <circle cx="13" cy="4" r="3" />
        <path d="M3 3l7 7v8l-4 12M23 3l-7 7v8l3 8M22 24l4 6 6-10" />
      </svg>
      <span className="ml-[5px]">Accessibility: Good to go</span>
      <div className="ml-auto flex h-full w-[74px] items-center justify-center bg-[#ababab]">
        <svg viewBox="0 0 26 26" className="h-[26px] w-[26px]" fill="#fff">
          <path d="M0 0h7v7H0zM9 0h8v7H9zM19 0h7v7h-7zM0 9h7v8H0zM9 9h8v8H9zM19 9h7v8h-7zM0 19h7v7H0zM9 19h8v7H9zM19 19h7v7h-7z" />
        </svg>
      </div>
      <svg viewBox="0 0 28 26" className="ml-[21px] h-[26px] w-[28px]" fill="none" stroke="#777" strokeWidth="2">
        <rect x="1" y="1" width="26" height="24" />
        <path d="M8 6h12v14H8zM11 10h6M11 13h6M11 16h6" />
      </svg>
      <svg viewBox="0 0 28 26" className="ml-[44px] h-[26px] w-[28px]" fill="none" stroke="#777" strokeWidth="2">
        <rect x="1" y="1" width="26" height="24" />
        <path d="M1 16h18V1M10 1v15" />
      </svg>
      <div className="ml-[39px] h-[4px] w-[15px] bg-[#777]" />
      <div className="ml-[15px] flex h-[8px] w-[200px] items-center rounded-full bg-[#9b9b9b]">
        <div className="ml-[92px] h-[32px] w-[32px] rounded-full bg-white shadow-sm" />
      </div>
      <svg viewBox="0 0 16 16" className="ml-[14px] h-[16px] w-[16px]" fill="#777"><path d="M6 0h4v6h6v4h-6v6H6v-6H0V6h6z" /></svg>
      <span className="mr-[50px] ml-[34px] w-[60px] text-[23px] font-light text-[#666]">127%</span>
    </div>
  )
}

export default function App() {
  return (
    <div className="flex h-[862px] w-[2992px] overflow-hidden bg-[#d9d9d9] font-['Inter',sans-serif]">
      <div className="mt-[3px] flex h-[859px] w-[2984px] shrink-0 flex-col overflow-hidden rounded-t-[16px] rounded-b-[16px] shadow-[0_0_6px_rgba(0,0,0,0.35)]">
        <TitleBar />
        <div className="h-[209px] shrink-0 border-b-2 border-[#d0d0d0] bg-linear-to-b from-[#fafafa] to-[#efefef]">
          <RibbonTabs />
          <div className="flex">
            <ClipboardGroup />
            <FontGroup />
            <AlignGroup />
            <WrapGroup />
            <NumberGroup />
            <StylesGroup />
            <CellsGroup />
            <EditingGroup />
            <AnalyseGroup />
          </div>
        </div>
        <FormulaBar />
        <div className="h-[5px] shrink-0 border-y-2 border-[#bdbdbd] bg-white" />
        <Sheet />
        <SheetTabs />
        <StatusBar />
      </div>
      <div className="flex-1 overflow-hidden bg-[repeating-linear-gradient(180deg,#dcdcdc_0,#dcdcdc_36px,#b5b5b5_36px,#b5b5b5_38px)] pt-[252px] font-['Lato',sans-serif] text-[24px] font-bold text-black">
        a
      </div>
    </div>
  )
}
